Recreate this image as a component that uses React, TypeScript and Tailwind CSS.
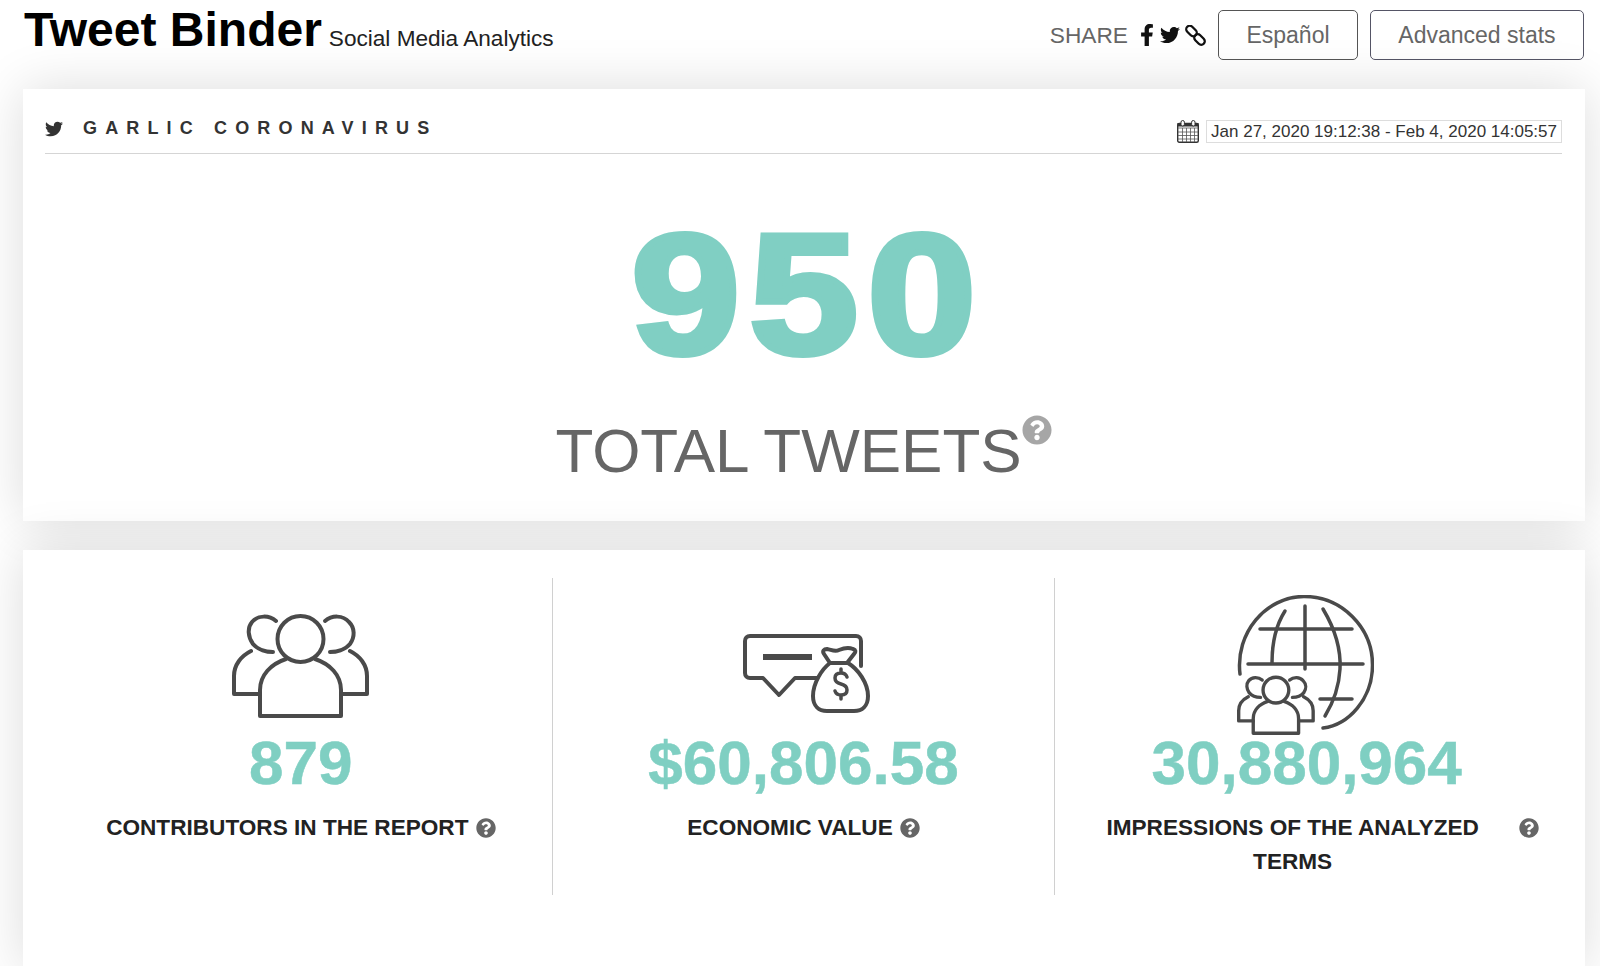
import { FaFacebookF, FaTwitter, FaQuestionCircle } from 'react-icons/fa';

const font = "font-['Liberation_Sans',Arial,sans-serif]";

function ChainIcon() {
  return (
    <svg width="21" height="21" viewBox="0 0 21 21" fill="none" stroke="#111" strokeWidth="2.3">
      <rect x="0.500" y="2.500" width="12" height="7" rx="3.500" transform="rotate(45 6.500 6)" />
      <rect x="8.500" y="11" width="12" height="7" rx="3.500" transform="rotate(45 14.500 14.500)" />
    </svg>
  );
}

function CalendarIcon() {
  return (
    <svg width="22" height="23" viewBox="0 0 22 23" fill="none" stroke="#333" strokeWidth="1">
      <rect x="0.700" y="3.500" width="20.600" height="18.800" rx="1.500" fill="#fff" strokeWidth="1.400" />
      <rect x="1" y="3.500" width="20" height="2.500" fill="#333" />
      <rect x="4" y="0.500" width="3.400" height="5.500" rx="1.700" fill="#fff" />
      <rect x="14.600" y="0.500" width="3.400" height="5.500" rx="1.700" fill="#fff" />
      <path d="M1 8h20M1 12h20M1 15.500h20M1 19h20M5.500 8v14M9.500 8v14M13.500 8v14M17.500 8v14" strokeWidth="0.800" stroke="#555" />
    </svg>
  );
}

function People() {
  return (
    <>
      <circle cx="69.500" cy="27" r="23" fill="#fff" />
      <path d="M29 104V78c0-15 11-26 26-31M110 104V78c0-15-11-26-26-31M29 104h81" />
      <path d="M45 9C38 3 27 3 21 10c-5 6-4 15 1 22 5 6 14 8 20 8" />
      <path d="M94 9c7-6 18-6 24 1 6 6 6 15 1 22-5 6-14 8-20 8" />
      <path d="M20 39C10 44 3 53 3 64v18h26M119 39c10 5 17 14 17 25v18h-26" />
    </>
  );
}

function PeopleIcon() {
  return (
    <svg width="140" height="106" viewBox="0 0 140 106" fill="none" stroke="#4a4a4a" strokeWidth="4" strokeLinecap="round" strokeLinejoin="round">
      <People />
    </svg>
  );
}

function MoneyIcon() {
  return (
    <svg width="127" height="79" viewBox="0 0 127 79" fill="none" stroke="#4a4a4a" strokeWidth="4" strokeLinecap="round" strokeLinejoin="round">
      <path d="M77 44H52L36 61 20 44H7c-3 0-5-2-5-5V7c0-3 2-5 5-5h106c3 0 5 2 5 5v25" />
      <path d="M20 23h49" strokeWidth="6" strokeLinecap="butt" />
      <path d="M87 29l-6-9c-2-3 0-5 3-5 5 1 8 3 12 1 5-2 9-3 14-1 3 1 3 3 1 5l-7 9z" fill="#fff" />
      <path d="M87 29c-8 6-17 20-17 33 0 10 6 15 14 15h27c8 0 14-5 14-15 0-13-10-27-20-33z" fill="#fff" />
      <path d="M104 43c-1-3-3-4-6-4-4 0-6 2-6 5s2 5 6 6 6 3 6 6-2 5-6 5c-3 0-5-1-6-4M98 35v4M98 61v4" strokeWidth="3.500" />
    </svg>
  );
}

function GlobeIcon() {
  return (
    <svg width="140" height="140" viewBox="0 0 140 140" fill="none" stroke="#4a4a4a" strokeWidth="3.500" strokeLinecap="round" strokeLinejoin="round">
      <path d="M6 79C1 38 32 1.500 70 1.500c38 0 68.500 31 68.500 68.500 0 34-24 60-49.500 63" />
      <path d="M26 34h92M14 69h115M86 104h32" />
      <path d="M71 11v63M51 16C42 30 38 50 38 68M89 14c12 20 18 41 17 60-1 18-7 34-15 47" />
      <g transform="translate(3 80) scale(0.56)" strokeWidth="6">
        <People />
      </g>
    </svg>
  );
}

export default function App() {
  return (
    <div className={`${font} h-[966px] overflow-hidden bg-white`}>
      {/* Header */}
      <header className="flex h-[89px] items-start justify-between pl-[24px] pr-[16px]">
        <div className="flex items-baseline gap-[7px] pt-[2px]">
          <h1 className="text-[48px] leading-[55px] font-bold text-black">Tweet Binder</h1>
          <span className="text-[22.600px] text-[#222]">Social Media Analytics</span>
        </div>
        <div className="flex items-center pt-[10px]">
          <span className="text-[22.700px] text-[#666]">SHARE</span>
          <FaFacebookF className="ml-[8px] text-[22px] text-[#111]" />
          <FaTwitter className="ml-[2px] text-[20px] text-[#111]" />
          <div className="ml-[5px]"><ChainIcon /></div>
          <button className="ml-[12px] h-[50px] w-[140px] rounded-[5px] border border-[#555] text-[23px] text-[#666]">Español</button>
          <button className="ml-[12px] h-[50px] w-[214px] rounded-[5px] border border-[#556] text-[23px] text-[#666]">Advanced stats</button>
        </div>
      </header>

      <main className="mx-[23px] flex w-[1562px] flex-col gap-[29px]">
        {/* Total tweets */}
        <section className="h-[432px] bg-white pl-[22px] pr-[23px] shadow-[0_0_50px_rgba(0,0,0,0.14)]">
          <div className="flex h-[65px] items-end justify-between border-b border-[#d5d5d5]">
            <div className="flex items-center pb-[11px]">
              <FaTwitter className="text-[18px] text-[#333]" />
              <span className="ml-[20px] text-[18px] font-bold tracking-[8.150px] text-[#333]">GARLIC CORONAVIRUS</span>
            </div>
            <div className="flex items-center gap-[7px] pb-[10px]">
              <CalendarIcon />
              <span className="border border-[#ddd] px-[4px] text-[17px] leading-[21px] text-[#333]">Jan 27, 2020 19:12:38 - Feb 4, 2020 14:05:57</span>
            </div>
          </div>
          <div className="flex flex-col items-center">
            <div className="mt-[30px] scale-x-[1.145] pl-[8px] text-[171px] leading-[220px] font-bold tracking-[8px] text-[#80cfc3] [-webkit-text-stroke:6px_#80cfc3]">950</div>
            <div className="mt-[9px] flex items-start">
              <span className="text-[62px] leading-[76px] text-[#666]">TOTAL TWEETS</span>
              <FaQuestionCircle className="mt-[2px] text-[30px] text-[#a6a6a6]" />
            </div>
          </div>
        </section>

        {/* Stats */}
        <section className="h-[420px] bg-white px-[27px] pt-[28px] shadow-[0_0_50px_rgba(0,0,0,0.14)]">
          <div className="grid h-[317px] grid-cols-3 divide-x divide-[#d0d0d0]">
            <div className="flex flex-col items-center">
              <div className="flex h-[150px] items-end pb-[10px]"><PeopleIcon /></div>
              <div className="text-[62px] leading-[70px] font-bold text-[#7fcfc2] [-webkit-text-stroke:0.5px_#7fcfc2]">879</div>
              <div className="mt-[13px] flex items-center gap-[7px] text-[22.600px] leading-[34px] font-bold text-[#222]">
                CONTRIBUTORS IN THE REPORT
                <FaQuestionCircle className="text-[20px] text-[#666]" />
              </div>
            </div>
            <div className="flex flex-col items-center">
              <div className="flex h-[150px] items-end pb-[15px] pl-[6px]"><MoneyIcon /></div>
              <div className="text-[62px] leading-[70px] font-bold text-[#7fcfc2] [-webkit-text-stroke:0.5px_#7fcfc2]">$60,806.58</div>
              <div className="mt-[13px] flex items-center gap-[7px] text-[22.600px] leading-[34px] font-bold text-[#222]">
                ECONOMIC VALUE
                <FaQuestionCircle className="text-[20px] text-[#666]" />
              </div>
            </div>
            <div className="flex flex-col items-center">
              <div className="flex h-[150px] items-end pr-[5px]"><div className="mb-[-7px]"><GlobeIcon /></div></div>
              <div className="text-[62px] leading-[70px] font-bold text-[#7fcfc2] [-webkit-text-stroke:0.5px_#7fcfc2]">30,880,964</div>
              <div className="mt-[13px] flex items-start gap-[8px]">
                <div className="w-[436px] text-center text-[22.600px] leading-[34px] font-bold text-[#222]">IMPRESSIONS OF THE ANALYZED TERMS</div>
                <FaQuestionCircle className="mt-[7px] text-[20px] text-[#666]" />
              </div>
            </div>
          </div>
        </section>
      </main>
    </div>
  );
}
